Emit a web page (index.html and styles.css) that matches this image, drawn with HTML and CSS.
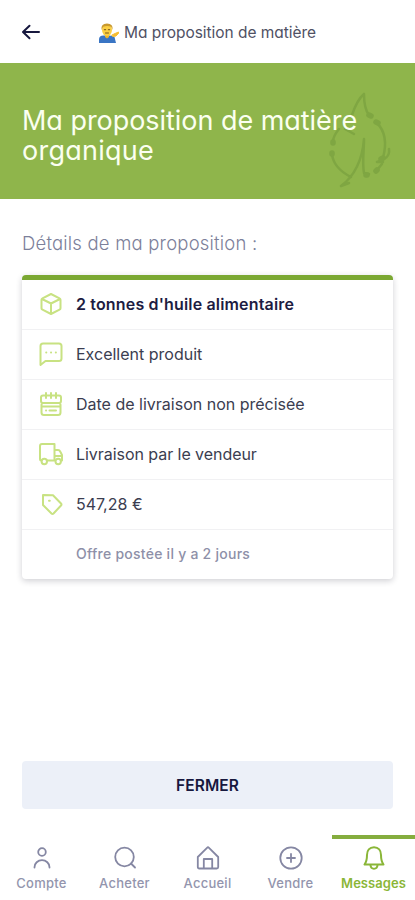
FILE: index.html
```html
<!DOCTYPE html>
<html lang="fr">
<head>
<meta charset="utf-8">
<meta name="viewport" content="width=device-width, initial-scale=1">
<title>Ma proposition de matière</title>
<link rel="stylesheet" href="styles.css">
</head>
<body>
<div class="app">
  <header class="topbar">
    <svg class="back" viewBox="0 0 20 18"><path d="M18 8H2.500M8.500 1.800 2 8l6.500 6.200"/></svg>
    <div class="topbar-title">
      <svg class="person" viewBox="0 0 21 20">
        <path d="M1 20v-3.500q0-4 4.500-4h6q3.500 0 5 1.500l1.500 6z" fill="#3975c4"/>
        <path d="M7 11h4v3l-2 1.500L7 14z" fill="#eeb52c"/>
        <ellipse cx="9" cy="7" rx="5" ry="6" fill="#fbcf43"/>
        <path d="M3.500 7Q2.500.5 9 .5t5.500 6.500l-1.300-3.300q-4-1.500-8 0z" fill="#c9992e"/>
        <path d="M6.300 6.700h1.400m2.600 0h1.400M7.500 10h3" stroke="#75551c" fill="none"/>
        <path d="m14 12 3-1.500 3.500-1.500.3 1-2.800 3-3 .5z" fill="#f6bd32" stroke="#f6bd32"/>
      </svg>
      <span>Ma proposition de matière</span>
    </div>
  </header>
  <section class="hero">
    <h1><span class="line1">Ma proposition de matière</span><br><span class="line2">organique</span></h1>
    <svg class="leaf" viewBox="0 0 64 98">
      <path d="M35 3C29 8 26 15 23 24M35 3c0 8 1 16 5 21M10 38Q4 45 4 51M3 63c1 10 9 18 19 23M48 32c8 8 10 20 6 35M16 38l9 5M60 58c1 8-4 10-12 13h6M48 79l5-6"/>
      <path d="M12 95c12-9 21-22 23-47 0 12-2 23 0 34l5 1M12 95l8-3"/>
      <path class="dots" d="M40 24l2 1M47 31l2 1M4 51v1M3 62v1M52 68l2-1M37 84h1M47 80l1-1"/>
    </svg>
  </section>
  <main>
    <h2><span>Détails de ma proposition :</span></h2>
    <div class="card">
      <div class="row strong">
        <svg viewBox="0 0 24 24"><path d="m12 2 8.500 4.300q1 .5 1 1.500v8.400q0 1-1 1.500L12 22l-8.500-4.300q-1-.5-1-1.500V7.800q0-1 1-1.500zM3 7l9 4.500L21 7M12 11.500V22"/></svg>
        <span>2 tonnes d'huile alimentaire</span>
      </div>
      <div class="row">
        <svg viewBox="0 0 24 24"><path d="M1.500 23V4q0-2.500 2.500-2.500h16q2.500 0 2.500 2.500v12.500q0 2.500-2.500 2.500H6.500z"/><path d="M7.200 10.500h.1M12 10.500h.1M16.800 10.500h.1"/></svg>
        <span>Excellent produit</span>
      </div>
      <div class="row">
        <svg viewBox="0 0 24 24"><path d="M7 1v5M12 1v5M17 1v5M4 3.500h16q2 0 2 2v3.500q0 2-2 2H4q-2 0-2-2V5.500q0-2 2-2M4 11q-1.500 0-1.500 2v7.500Q2.500 23 5 23h14q2.500 0 2.500-2.500V13q0-2-1.500-2M3 14.500h18M7 18.500h.1M10.500 18.500h6.500"/></svg>
        <span>Date de livraison non précisée</span>
      </div>
      <div class="row">
        <svg viewBox="0 0 24 24"><path d="M2.500 18.500Q1 18.500 1 17V4q0-2 2-2h12.500v16.500H8M15.500 8h3.500q1.500 0 2.200 1.500L23 13v5.500h-1M15.500 14H23"/><circle cx="5.300" cy="19.500" r="2.700"/><circle cx="19.200" cy="19.500" r="2.700"/></svg>
        <span class="delivery">Livraison par le vendeur</span>
      </div>
      <div class="row">
        <svg viewBox="0 0 24 24"><path d="M4 3 14 3.300 22 11.500q1 1 0 2l-7.500 8q-1 1-2 0L4 13zM10 8.800h.8"/></svg>
        <span>547,28 €</span>
      </div>
      <div class="row posted"><span>Offre postée il y a 2 jours</span></div>
    </div>
    <button class="close"><span>FERMER</span></button>
  </main>
  <nav>
    <a class="tab"><svg viewBox="0 0 24 24"><circle cx="12" cy="6" r="3.800"/><path d="M4.500 21.500v-.3a7.500 7 0 0 1 15 0v.3"/></svg><span>Compte</span></a>
    <a class="tab"><svg viewBox="0 0 24 24"><circle cx="11.500" cy="11" r="9.300"/><path d="m18 17.500 4 4"/></svg><span>Acheter</span></a>
    <a class="tab"><svg viewBox="0 0 24 24"><path d="M1.800 11 11 1.800q1-1 2 0l9.200 9.200v10q0 1.500-1.500 1.500H3.300Q1.800 22.500 1.800 21zM7.800 22v-9h8.400v9"/></svg><span>Accueil</span></a>
    <a class="tab"><svg viewBox="0 0 24 24"><circle cx="12" cy="12" r="10.700"/><path d="M12 8v8M8 12h8"/></svg><span>Vendre</span></a>
    <a class="tab active"><svg viewBox="0 0 24 24"><path d="M12 1.300c-4.500 0-7 3.200-7 7.700 0 5.500-1 7.500-2.500 9.500h19C20 16.500 19 14.500 19 9c0-4.500-2.500-7.700-7-7.700M8.300 18.500q.5 4.300 3.700 4.300t3.700-4.300"/></svg><span>Messages</span></a>
  </nav>
</div>
</body>
</html>
```
FILE: styles.css
```css
* { box-sizing: border-box; }
body { margin: 0; background: #fff; color: #3b3d50; font-family: Inter, "Liberation Sans", sans-serif; }
svg { fill: none; stroke: currentColor; stroke-linecap: round; stroke-linejoin: round; flex: none; }
span { white-space: nowrap; }
.app { width: 415px; height: 900px; display: flex; flex-direction: column; overflow: hidden; }
.topbar { height: 63px; display: flex; align-items: center; padding: 2px 0 0 21px; }
.back { width: 20px; height: 18px; color: #17183e; stroke-width: 2; }
.topbar-title { display: flex; align-items: center; gap: 5px; margin-left: 57px; font-size: 15.500px; letter-spacing: -.04px; color: #505164; }
.topbar-title, h1, h2 { font-feature-settings: "cv11"; }
.person { width: 21px; height: 20px; stroke: none; }
.hero { height: 136px; background: #8fb54b; display: flex; align-items: center; padding-left: 22px; padding-top: 9px; }
h1 { margin: 0; font-weight: 400; font-size: 27px; line-height: 30px; color: #fbfff0; width: 307px; position: relative; z-index: 1; }
.line1 { letter-spacing: -.04px; }
.line2 { letter-spacing: .25px; }
.leaf { width: 64px; height: 98px; color: #7fa642; stroke-width: 2.500; margin-top: 9px; }
.dots { stroke-width: 5.500; }
main { padding: 0 22px; flex: 1; }
h2 { margin: 32px 0 20px; font-size: 18.500px; font-weight: 300; line-height: 24px; color: #7c809a; letter-spacing: .2px; }
.card { width: 371px; height: 304px; background: #fff; border-top: 5px solid #7ba832; border-radius: 4px; box-shadow: 0 2px 6px rgba(20,20,40,.2); }
.row { height: 50px; border-bottom: 1px solid #f1f1f3; display: flex; align-items: center; padding: 0 0 2px 17px; gap: 13px; font-size: 16px; }
.row svg { width: 24px; height: 24px; color: #c8e282; stroke-width: 2; }
.strong { font-weight: 600; color: #1d1c42; letter-spacing: .16px; }
.delivery { letter-spacing: -.05px; }
.row.posted { height: 49px; border: 0; padding-left: 54px; font-size: 14px; font-weight: 500; color: #8e90a8; letter-spacing: .25px; }
.close { display: flex; align-items: center; justify-content: center; width: 371px; height: 48px; margin: 182px 0 0; padding: 0; border: 0; border-radius: 4px; background: #ecf0f8; color: #17183e; font: 600 15.500px Inter, sans-serif; letter-spacing: .1px; }
nav { height: 65px; display: grid; grid-template-columns: repeat(5, 83px); }
.tab { display: flex; flex-direction: column; align-items: center; padding-top: 7px; gap: 4px; border-top: 4px solid transparent; color: #9395ad; font-size: 13px; font-weight: 500; line-height: 18px; letter-spacing: .25px; }
.tab svg { width: 24px; height: 24px; stroke-width: 1.800; color: #8587a3; }
.tab.active { border-color: #85ad3e; color: #8ab638; font-weight: 600; letter-spacing: .05px; }
.tab.active svg { color: #8ab638; stroke-width: 2; }
```
